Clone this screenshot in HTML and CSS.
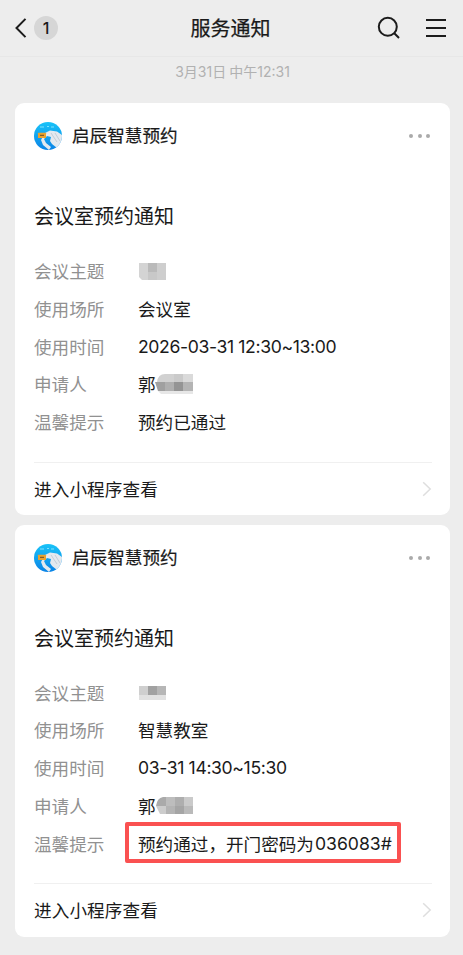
FILE: index.html
```html
<!DOCTYPE html>
<html lang="zh-CN">
<head>
<meta charset="utf-8">
<title>服务通知</title>
<link rel="stylesheet" href="styles.css">
</head>
<body>
<svg class="defs" width="0" height="0" aria-hidden="true">
  <defs>
    <linearGradient id="sky" x1="0" y1="0" x2="0" y2="1"><stop offset="0" stop-color="#19c3f8"/><stop offset="1" stop-color="#0a83e6"/></linearGradient>
    <clipPath id="round"><circle cx="14" cy="14" r="14"/></clipPath>
    <symbol id="avatar" viewBox="0 0 28 28">
      <g clip-path="url(#round)">
        <rect width="28" height="28" fill="url(#sky)"/>
        <path d="M6 5h4M13 4.5h2M17 5h3" stroke="#7fe3fb" stroke-width="1.2"/>
        <path d="M11 11L16 8.5L23 9.5L28 13V25L23 26L18 22L16 19L17 15L13 14L10 17L12 21L17 25L15 28L9 23L7 18Z" fill="#e3e9ef"/>
        <path d="M17 11L23 20M21 11L26 19" stroke="#b4c0cd" stroke-width=".7" fill="none"/>
        <rect x="4" y="10.7" width="8" height="5.3" rx=".5" fill="#e9a32e"/>
        <path d="M6 13.3h4" stroke="#805e2a" stroke-width="1.2"/>
      </g>
    </symbol>
  </defs>
</svg>
<header class="topbar">
  <div class="back">
    <svg width="12" height="20" viewBox="0 0 12 20"><path d="M10.5.9L1.5 10L10.5 19.1"/></svg>
    <span class="count">1</span>
  </div>
  <h1>服务通知</h1>
  <div class="tools">
    <svg width="23" height="23" viewBox="0 0 23 23"><circle cx="10.8" cy="10.8" r="9"/><path d="M17.3 17.3L22 22"/></svg>
    <svg width="20" height="20" viewBox="0 0 20 20"><path d="M0 2h20M0 10h20M0 18h20"/></svg>
  </div>
</header>
<main>
  <time class="stamp"><span class="num">3</span>月<span class="num">31</span>日 中午<span class="num">12:31</span></time>

  <article class="card">
    <div class="sender">
      <svg class="avatar"><use href="#avatar"/></svg>
      <span class="name">启辰智慧预约</span>
      <span class="more"><i></i><i></i><i></i></span>
    </div>
    <h2>会议室预约通知</h2>
    <dl>
      <dt>会议主题</dt>
      <dd><svg class="mosaic topic" width="28" height="18"><path fill="#d4d4d4" d="M1 0h9v17H4L1 14z"/><path fill="#bababa" d="M10 0h9v9h-9z"/><path fill="#cecece" d="M19 0h9v17h-9z"/><path fill="#c8c8c8" d="M10 9h9v8h-9z"/></svg></dd>
      <dt>使用场所</dt><dd>会议室</dd>
      <dt>使用时间</dt><dd><span class="num date">2026-03-31 12:30~13:00</span></dd>
      <dt>申请人</dt>
      <dd>郭<svg class="mosaic" width="38" height="21"><path fill="#d1d1d1" d="M2 8Q3 0 10 0h9v8z"/><path fill="#cacaca" d="M19 0h9v8h-9z"/><path fill="#dadada" d="M28 0h10v8H28z"/><path fill="#a0a0a0" d="M0 8h10v9H3z"/><path fill="#afafaf" d="M10 8h9v9h-9z"/><path fill="#949494" d="M19 8h9v9h-9z"/><path fill="#b4b4b4" d="M28 8h10v9H28z"/><path fill="#e7e7e7" d="M3 17h35v3H6z"/></svg></dd>
      <dt>温馨提示</dt><dd>预约已通过</dd>
    </dl>
    <div class="link"><span>进入小程序查看</span><svg width="10" height="16" viewBox="0 0 10 16"><path d="M1.2 1.2L8.2 8L1.2 14.8"/></svg></div>
  </article>

  <article class="card">
    <div class="sender">
      <svg class="avatar"><use href="#avatar"/></svg>
      <span class="name">启辰智慧预约</span>
      <span class="more"><i></i><i></i><i></i></span>
    </div>
    <h2>会议室预约通知</h2>
    <dl>
      <dt>会议主题</dt>
      <dd><svg class="mosaic topic" width="28" height="14"><path fill="#cfcfcf" d="M1 0h9v9H1z"/><path fill="#a1a1a1" d="M10 0h9v9h-9z"/><path fill="#b6b6b6" d="M19 0h9v9h-9z"/><path fill="#e1e1e1" d="M1 9h27v5H1z"/></svg></dd>
      <dt>使用场所</dt><dd>智慧教室</dd>
      <dt>使用时间</dt><dd><span class="num date">03-31 14:30~15:30</span></dd>
      <dt>申请人</dt>
      <dd>郭<svg class="mosaic" width="38" height="18"><path fill="#aaa" d="M1 9Q2 1 8 0h3v9z"/><path fill="#bdbdbd" d="M11 0h9v9h-9z"/><path fill="#aeaeae" d="M20 0h9v9h-9z"/><path fill="#cacaca" d="M29 0h9v9h-9z"/><path fill="#ccc" d="M1 9h10v8H5z"/><path fill="#b4b4b4" d="M11 9h9v8h-9z"/><path fill="#a5a5a5" d="M20 9h9v8h-9z"/><path fill="#bababa" d="M29 9h9v8h-9z"/></svg></dd>
      <dt>温馨提示</dt><dd class="marked">预约通过，开门密码为<span class="num code">036083#</span></dd>
    </dl>
    <div class="link"><span>进入小程序查看</span><svg width="10" height="16" viewBox="0 0 10 16"><path d="M1.2 1.2L8.2 8L1.2 14.8"/></svg></div>
  </article>
</main>
</body>
</html>
```
FILE: styles.css
```css
*, *::after { box-sizing: border-box; }

body {
  margin: 0;
  height: 955px;
  overflow: hidden;
  background: #ededed;
  color: #1a1a1a;
  font: 17.6px/38px "Noto Sans CJK SC", sans-serif;
}

.defs { position: absolute; }

svg { display: block; flex: none; }

.num { font-family: Inter, "Noto Sans CJK SC", sans-serif; }
.date { letter-spacing: -.37px; }
.code { margin-left: 1px; }

.topbar {
  display: grid;
  grid-template-columns: 1fr auto 1fr;
  align-items: center;
  height: 57px;
  padding: 0 17px 1px 15px;
  border-bottom: 1px solid #e7e7e7;
}

.topbar svg {
  fill: none;
  stroke: #1c1c1c;
  stroke-width: 2;
}

.back, .tools { display: flex; align-items: center; }
.back { gap: 7px; }
.tools { justify-content: flex-end; gap: 26px; }

.count {
  width: 24px;
  height: 24px;
  border-radius: 50%;
  background: #d6d6d6;
  font: 500 16px/24px Inter, sans-serif;
  text-align: center;
}

h1 {
  margin: 0;
  font-size: 20px;
  font-weight: 400;
  line-height: 30px;
  -webkit-text-stroke: .25px;
}

main { padding: 0 13px 0 15px; }

.stamp {
  display: block;
  height: 46px;
  color: #b1b1b1;
  font-size: 14px;
  line-height: 29px;
  text-align: center;
}

.card {
  height: 412px;
  margin-bottom: 9.5px;
  padding: 19px 18px 0 19px;
  border-radius: 9px;
  background: #fff;
}

.sender { display: flex; align-items: center; height: 28px; }
.avatar { width: 28px; height: 28px; }
.name { margin: -2px 0 0 10px; -webkit-text-stroke: .2px; }
.more { display: flex; gap: 4.3px; margin-left: auto; padding-right: 2px; }
.more i { width: 4px; height: 4px; border-radius: 50%; background: #aaa; }

h2 {
  margin: 50px 0 20px;
  font-size: 20px;
  font-weight: 400;
  line-height: 32px;
}

dl {
  display: grid;
  grid-template-columns: 104px 1fr;
  grid-auto-rows: 37.8px;
  margin: 0;
}

dt { color: #919191; }

dd {
  display: flex;
  align-items: center;
  margin: 0;
  white-space: nowrap;
}

.mosaic { margin-left: -1px; }
.topic { margin: 2px 0 0; }

.marked { position: relative; }

.marked::after {
  content: "";
  position: absolute;
  top: -3px;
  left: -13px;
  width: 276px;
  height: 41px;
  border: 4px solid #fa5151;
  border-radius: 2px;
}

.link {
  display: flex;
  align-items: center;
  justify-content: space-between;
  height: 53px;
  margin-top: 21px;
  border-top: 1px solid #f0f0f0;
  letter-spacing: .1px;
}

.link svg {
  fill: none;
  stroke: #dedede;
  stroke-width: 1.5;
}
```
